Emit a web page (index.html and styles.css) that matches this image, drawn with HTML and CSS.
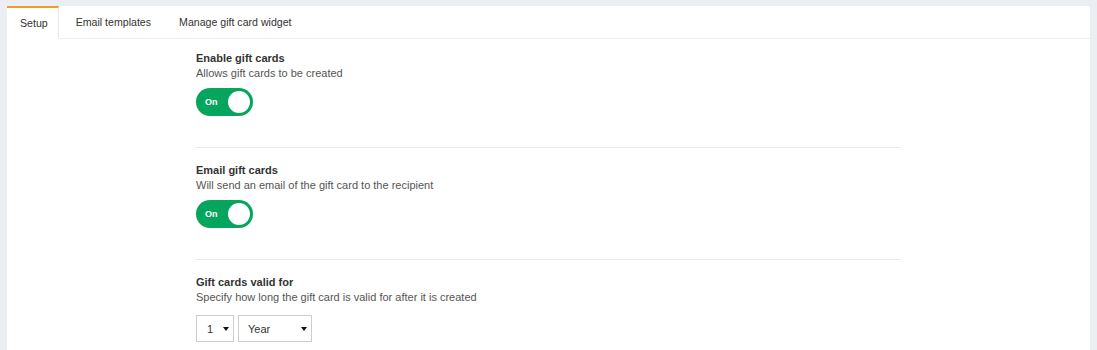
FILE: index.html
```html
<!DOCTYPE html>
<html lang="en">
<head>
    <meta charset="UTF-8">
    <title>Gift cards</title>
    <link rel="stylesheet" href="styles.css">
</head>
<body>
    <div class="card">
        <div class="tabs">
            <div class="tab active">Setup</div>
            <div class="tab">Email templates</div>
            <div class="tab">Manage gift card widget</div>
        </div>

        <div class="form">
            <div class="section">
                <div class="title">Enable gift cards</div>
                <div class="desc">Allows gift cards to be created</div>
                <div class="toggle on">
                    <span class="toggle-text">On</span>
                    <span class="toggle-knob"></span>
                </div>
            </div>

            <div class="section">
                <div class="title">Email gift cards</div>
                <div class="desc">Will send an email of the gift card to the recipient</div>
                <div class="toggle on">
                    <span class="toggle-text">On</span>
                    <span class="toggle-knob"></span>
                </div>
            </div>

            <div class="section last">
                <div class="title">Gift cards valid for</div>
                <div class="desc">Specify how long the gift card is valid for after it is created</div>
                <div class="selects">
                    <div class="select select-num">
                        <span>1</span>
                        <span class="caret"></span>
                    </div>
                    <div class="select select-unit">
                        <span>Year</span>
                        <span class="caret"></span>
                    </div>
                </div>
            </div>
        </div>
    </div>
</body>
</html>
```

FILE: styles.css
```css
body {
    margin: 0;
    padding: 6px 7px 0 7px;
    background: #ebeef3;
    font-family: "Liberation Sans", Arial, sans-serif;
    font-size: 11px;
    color: #333;
}

.card {
    background: #fff;
    border-radius: 0 3px 0 0;
    min-height: 344px;
}

/* tabs */
.tabs {
    display: flex;
    height: 32px;
    border-bottom: 1px solid #eeeff1;
    font-size: 10.6px;
}

.tab {
    padding: 0 14px;
    line-height: 32px;
    color: #333;
}

.tab.active {
    padding: 0 10px 0 13px;
    border-top: 2px solid #f39a2f;
    border-right: 1px solid #e6e8eb;
    line-height: 30px;
    height: 31px;
    background: #fff;
}

.tab.active + .tab {
    margin-left: 3px;
}

/* form */
.form {
    width: 704px;
    margin-left: 189px;
}

.section {
    padding: 14px 0 31px;
    border-bottom: 1px solid #e7e8ea;
}

.section:first-child {
    padding-top: 11px;
}

.section.last {
    border-bottom: none;
    padding-bottom: 0;
}

.title {
    font-weight: bold;
    line-height: 16px;
    color: #333;
}

.desc {
    line-height: 15px;
    color: #555;
}

/* toggle */
.toggle {
    margin-top: 7px;
    width: 57px;
    height: 28px;
    border-radius: 14px;
    background: #05a55e;
    display: flex;
    align-items: center;
    justify-content: space-between;
    box-sizing: border-box;
    padding: 0 3px 0 9px;
}

.toggle-text {
    color: #fff;
    font-size: 9px;
    font-weight: bold;
}

.toggle-knob {
    width: 22px;
    height: 22px;
    border-radius: 50%;
    background: #fff;
}

/* selects */
.selects {
    display: flex;
    gap: 4px;
    margin-top: 10px;
}

.select {
    height: 27px;
    box-sizing: border-box;
    border: 1px solid #c9ccd2;
    display: flex;
    align-items: center;
    justify-content: space-between;
    padding: 0 4px 0 10px;
    color: #333;
}

.select-num {
    width: 38px;
}

.select-unit {
    width: 74px;
    padding-left: 9px;
}

.caret {
    width: 0;
    height: 0;
    border-left: 3.5px solid transparent;
    border-right: 3.5px solid transparent;
    border-top: 4px solid #111;
}
```
